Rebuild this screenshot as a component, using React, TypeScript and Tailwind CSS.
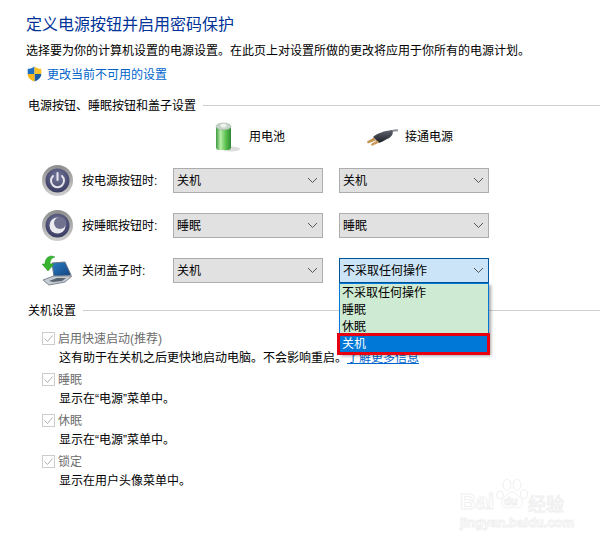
import React from "react";

function Chevron() {
  return (
    <svg className="w-[11px] h-[7px]" viewBox="0 0 11 7" fill="none" stroke="#555" strokeWidth={1}>
      <path d="M1 1l4.5 4.5L10 1" />
    </svg>
  );
}

function Select({ value, active }: { value: string; active?: boolean }) {
  return (
    <div
      className={
        "w-[150px] h-[25px] flex items-center justify-between pl-[3px] pr-[4px] border " +
        (active ? "bg-[#cce4f7] border-[#005499]" : "bg-[#e1e1e1] border-[#adadad]")
      }
    >
      <span className="text-[12px]">{value}</span>
      <Chevron />
    </div>
  );
}

function Shield() {
  return (
    <svg className="w-[15px] h-[16px]" viewBox="0 0 15 16">
      <path d="M0.700 2.800C3 2.800 5.500 2 7.500 0.500V8H0.700z" fill="#1f6fc0" />
      <path d="M7.500 0.500V8h6.800V2.800C12 2.800 9.500 2 7.500 0.500z" fill="#f6c32c" />
      <path d="M7.500 8v7.600c3.800-1.400 6.800-4 6.800-7.600z" fill="#1b5ca8" />
      <path d="M7.500 8H0.700c0 1.500 0.500 3 1.500 4.200 1.300 1.500 3.200 2.600 5.300 3.400z" fill="#f3b71f" />
    </svg>
  );
}

function Battery() {
  return (
    <svg className="w-[26px] h-[30px]" viewBox="0 0 26 30">
      <defs>
        <linearGradient id="batteryBody" x1="0" x2="1" y1="0" y2="0">
          <stop offset="0" stopColor="#3e9a3e" />
          <stop offset="0.3" stopColor="#b6eca6" />
          <stop offset="0.65" stopColor="#5cc24f" />
          <stop offset="1" stopColor="#2f8a33" />
        </linearGradient>
      </defs>
      <ellipse cx="16" cy="27" rx="9" ry="2.500" fill="#ddd" />
      <rect x="1" y="4" width="15" height="24" rx="3" fill="url(#batteryBody)" />
      <ellipse cx="8.500" cy="4.500" rx="7.500" ry="3.500" fill="#c6d3c8" stroke="#8fa893" strokeWidth={0.5} />
      <ellipse cx="8.500" cy="3.500" rx="3" ry="2" fill="#eef2ee" />
    </svg>
  );
}

function Plug() {
  return (
    <svg className="w-[33px] h-[18px]" viewBox="0 0 33 18">
      <defs>
        <linearGradient id="plugBody" x1="0" x2="0" y1="0" y2="1">
          <stop offset="0" stopColor="#5f6470" />
          <stop offset="1" stopColor="#1c1e24" />
        </linearGradient>
      </defs>
      <path d="M24 3c2-1 5-2 8-1.500" stroke="#8d9199" strokeWidth={2} fill="none" />
      <path d="M7 8C12 4 18 2 26 1c2 3 0 7-5 9-3 2-6 3-8 4z" fill="url(#plugBody)" />
      <path d="M8 8.500l-7 4 0.800 2 8-3z" fill="#c39450" />
      <path d="M11 11.500l-6 3.500 0.800 2 7.500-3.500z" fill="#c9985a" />
    </svg>
  );
}

function RoundButton({ sleep }: { sleep?: boolean }) {
  const id = sleep ? "sleepRim" : "powerRim";
  const faceId = sleep ? "sleepFace" : "powerFace";
  return (
    <svg className="w-[31px] h-[31px]" viewBox="0 0 31 31">
      <defs>
        <linearGradient id={id} x1="0" x2="0" y1="0" y2="1">
          <stop offset="0" stopColor="#8d8d8d" />
          <stop offset="1" stopColor="#cfcfcf" />
        </linearGradient>
        <radialGradient id={faceId} cx="0.5" cy="0.35" r="0.7">
          <stop offset="0" stopColor="#777a9c" />
          <stop offset="1" stopColor="#34365c" />
        </radialGradient>
      </defs>
      <circle cx="15.500" cy="15.500" r="15.500" fill={`url(#${id})`} />
      <circle cx="15.500" cy="15.500" r="12" fill={`url(#${faceId})`} />
      {sleep ? (
        <>
          <circle cx="15.500" cy="15.500" r="8" fill="#ececf0" />
          <circle cx="18" cy="13" r="6" fill="#70728f" />
        </>
      ) : (
        <>
          <path d="M11 11a6.500 6.500 0 1 0 9 0" fill="none" stroke="#e6e6ec" strokeWidth={2} strokeLinecap="round" />
          <path d="M15.500 8v7" stroke="#e6e6ec" strokeWidth={2} strokeLinecap="round" />
        </>
      )}
    </svg>
  );
}

function Laptop() {
  return (
    <svg className="w-[31px] h-[31px]" viewBox="0 0 31 31">
      <defs>
        <linearGradient id="laptopScreen" x1="0" x2="1" y1="0" y2="1">
          <stop offset="0" stopColor="#2a7fc9" />
          <stop offset="1" stopColor="#123f78" />
        </linearGradient>
      </defs>
      <path d="M10 8l13-1 6 13-17 2z" fill="url(#laptopScreen)" stroke="#6a7888" strokeWidth={1} />
      <path d="M1 25l11-4 18 0-7 6-16 3z" fill="#c6ccd2" stroke="#7c8690" strokeWidth={1} />
      <path d="M7 26l8-3 9 0-4 3-9 1z" fill="#596370" />
      <path d="M10 1C5 1 3 5 3 9H0l6 7 6-7H8c0-3 1-6 5-7z" fill="#37b52f" stroke="#1f8a22" strokeWidth={0.5} />
    </svg>
  );
}

function PowerRow({ icon, label, battery, plugged, active }: { icon: React.ReactNode; label: string; battery: string; plugged: string; active?: boolean }) {
  return (
    <div className="flex items-center h-[25px]">
      <div className="w-[40px] ml-[42px] flex items-center">{icon}</div>
      <div className="w-[91px] text-[12px]">{label}</div>
      <Select value={battery} />
      <div className="ml-[16px]">
        <Select value={plugged} active={active} />
      </div>
    </div>
  );
}

function SectionTitle({ title }: { title: string }) {
  return (
    <div className="flex items-center h-5 pl-[28px]">
      <span className="text-[12px] pt-[2px]">{title}</span>
      <div className="flex-1 h-px bg-[#d0d0d0] ml-[7px]" />
    </div>
  );
}

function Option({ label, desc, link }: { label: string; desc: string; link?: string }) {
  return (
    <div className="pl-[42px] h-[41px]">
      <div className="flex items-center h-[18px]">
        <svg className="w-[13px] h-[13px]" viewBox="0 0 13 13" fill="none">
          <rect x="0.500" y="0.500" width="12" height="12" stroke="#cccccc" />
          <path d="M2.500 6.500l3 3 5-6" stroke="#b0b0b0" />
        </svg>
        <span className="ml-[3px] text-[12px] pt-[2px] text-[#6d6d6d]">{label}</span>
      </div>
      <div className="h-[19px] pl-[17px] text-[12px] leading-[23px] whitespace-nowrap">
        {desc}
        {link && <span className="text-[#0066cc] underline">{link}</span>}
      </div>
    </div>
  );
}

function Watermark() {
  const outline = "[-webkit-text-stroke:1px_#f0f0f0] text-white font-['Liberation_Sans',sans-serif] font-bold";
  return (
    <div className="absolute left-[460px] top-[478px] w-[108px] h-[52px] select-none">
      <span className={"absolute left-0 top-[13px] text-[22px] leading-[22px] " + outline}>Bai</span>
      <svg className="absolute left-[35px] top-0 w-[34px] h-[34px]" viewBox="0 0 34 34" fill="none" stroke="#f0f0f0">
        <ellipse cx="5" cy="17" rx="3.500" ry="4" />
        <ellipse cx="12" cy="7" rx="4" ry="5.500" />
        <ellipse cx="22" cy="7" rx="4" ry="5.500" />
        <ellipse cx="29" cy="16" rx="3.500" ry="4.500" />
        <path d="M17 14c4 0 6 4 9 7 3 4 1 9-4 9-2 0-3-1-5-1s-3 1-5 1c-5 0-7-5-4-9 3-3 5-7 9-7z" />
      </svg>
      <span className={"absolute left-[44px] top-[17px] text-[11px] leading-[12px] " + outline}>du</span>
      <span className="absolute left-[68px] top-[15px] text-[18px] leading-[20px] text-white [-webkit-text-stroke:1px_#f0f0f0] font-['Noto_Sans_CJK_SC',sans-serif]">经验</span>
      <span className={"absolute left-0 top-[38px] text-[13px] leading-[14px] whitespace-nowrap " + outline}>jingyan.baidu.com</span>
    </div>
  );
}

export default function App() {
  return (
    <div className="relative w-[600px] h-[543px] overflow-hidden bg-white text-black font-['Liberation_Sans','Noto_Sans_CJK_SC',sans-serif]">
      <div className="h-6 pt-[13px] box-content pl-[26px] text-[16px] leading-6 text-[#003399]">定义电源按钮并启用密码保护</div>
      <div className="h-5 mt-[3px] pl-[26px] text-[12px] leading-[22px] whitespace-nowrap">选择要为你的计算机设置的电源设置。在此页上对设置所做的更改将应用于你所有的电源计划。</div>
      <div className="h-5 mt-[4px] pl-[27px] flex items-center">
        <Shield />
        <span className="ml-[5px] text-[12px] pt-[2px] text-[#0066cc]">更改当前不可用的设置</span>
      </div>
      <div className="mt-[11px]">
        <SectionTitle title="电源按钮、睡眠按钮和盖子设置" />
      </div>

      <div className="flex h-[30px] mt-[7px] pl-[215px]">
        <Battery />
        <span className="ml-[8px] text-[12px] leading-[30px]">用电池</span>
        <div className="ml-[81px] mt-[7px]">
          <Plug />
        </div>
        <span className="ml-[6px] text-[12px] leading-[30px]">接通电源</span>
      </div>

      <div className="mt-[16px] flex flex-col gap-5">
        <PowerRow icon={<RoundButton />} label="按电源按钮时:" battery="关机" plugged="关机" />
        <PowerRow icon={<RoundButton sleep />} label="按睡眠按钮时:" battery="睡眠" plugged="睡眠" />
        <PowerRow icon={<Laptop />} label="关闭盖子时:" battery="关机" plugged="不采取任何操作" active />
      </div>

      <div className="mt-[17px]">
        <SectionTitle title="关机设置" />
      </div>

      <div className="mt-[9px]">
        <Option label="启用快速启动(推荐)" desc="这有助于在关机之后更快地启动电脑。不会影响重启。" link="了解更多信息" />
        <Option label="睡眠" desc="显示在“电源”菜单中。" />
        <Option label="休眠" desc="显示在“电源”菜单中。" />
        <Option label="锁定" desc="显示在用户头像菜单中。" />
      </div>

      {/* open dropdown of the lid row */}
      <div className="absolute left-[339px] top-[283px] w-[150px] h-[71px] bg-[#cfead2] border border-[#0078d7] shadow-[2px_2px_3px_rgba(0,0,0,0.35)] text-[12px] leading-[17px] pt-[1px] pl-[2px]">
        <div className="h-[17px]">不采取任何操作</div>
        <div className="h-[17px]">睡眠</div>
        <div className="h-[17px]">休眠</div>
      </div>
      <div className="absolute left-[337px] top-[333px] w-[153px] h-[22px] bg-[#0078d7] border-[3px] border-[#e60012] text-white text-[12px] leading-[16px] pl-[2px]">关机</div>

      <Watermark />
    </div>
  );
}
